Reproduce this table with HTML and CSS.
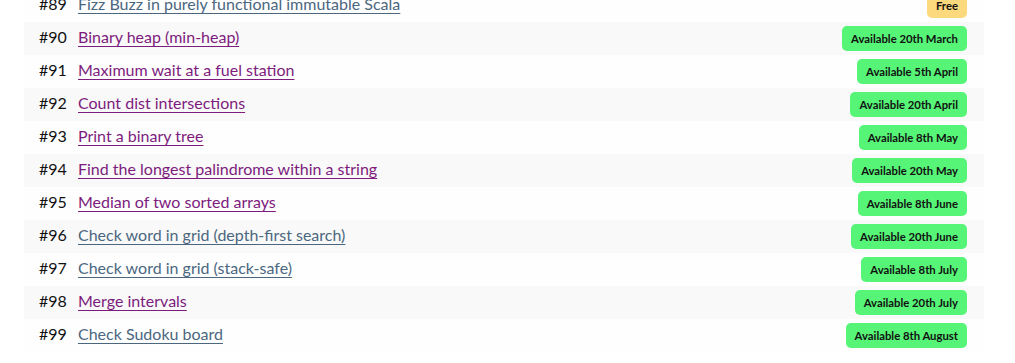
FILE: index.html
```html
<!DOCTYPE html>
<html lang="en">
<head>
<meta charset="utf-8">
<title>Problems</title>
<link rel="stylesheet" href="styles.css">
</head>
<body>
<div class="page">
  <ul class="list">
    <li class="row"><span class="num">#89</span><a class="link fresh" href="#">Fizz Buzz in purely functional immutable Scala</a><span class="badge free">Free</span></li>
    <li class="row"><span class="num">#90</span><a class="link seen" href="#">Binary heap (min-heap)</a><span class="badge avail">Available 20th March</span></li>
    <li class="row"><span class="num">#91</span><a class="link seen" href="#">Maximum wait at a fuel station</a><span class="badge avail">Available 5th April</span></li>
    <li class="row"><span class="num">#92</span><a class="link seen" href="#">Count dist intersections</a><span class="badge avail">Available 20th April</span></li>
    <li class="row"><span class="num">#93</span><a class="link seen" href="#">Print a binary tree</a><span class="badge avail">Available 8th May</span></li>
    <li class="row"><span class="num">#94</span><a class="link seen" href="#">Find the longest palindrome within a string</a><span class="badge avail">Available 20th May</span></li>
    <li class="row"><span class="num">#95</span><a class="link seen" href="#">Median of two sorted arrays</a><span class="badge avail">Available 8th June</span></li>
    <li class="row"><span class="num">#96</span><a class="link fresh" href="#">Check word in grid (depth-first search)</a><span class="badge avail">Available 20th June</span></li>
    <li class="row"><span class="num">#97</span><a class="link fresh" href="#">Check word in grid (stack-safe)</a><span class="badge avail">Available 8th July</span></li>
    <li class="row"><span class="num">#98</span><a class="link seen" href="#">Merge intervals</a><span class="badge avail">Available 20th July</span></li>
    <li class="row"><span class="num">#99</span><a class="link fresh" href="#">Check Sudoku board</a><span class="badge avail">Available 8th August</span></li>
  </ul>
</div>
</body>
</html>
```
FILE: styles.css
```css
html, body {
  margin: 0;
  padding: 0;
  background: #ffffff;
}
body {
  font-family: Lato, "Liberation Sans", sans-serif;
  color: #111111;
  overflow: hidden;
}
.page {
  width: 960px;
  margin: -11px 0 0 24px;
}
.list {
  list-style: none;
  margin: 0;
  padding: 0;
}
.row {
  display: flex;
  align-items: center;
  height: 33px;
  padding: 0 17px 0 15px;
  background: #fefefe;
}
.row:nth-child(even) {
  background: #f9f9f9;
}
.num {
  width: 39px;
  font-size: 16px;
  color: #111111;
  margin-bottom: 4px;
}
.link {
  font-size: 16px;
  margin-bottom: 4px;
  text-decoration: underline;
  text-underline-offset: 3px;
  text-decoration-thickness: 1px;
}
.link.seen { color: #7d1c7d; }
.link.fresh { color: #4b6780; }
.badge {
  margin-left: auto;
  font-size: 11.3px;
  font-weight: 700;
  color: #111111;
  height: 25px;
  line-height: 25px;
  padding: 0 9px;
  border-radius: 5px;
}
.badge.avail { background: #56f577; }
.badge.free { background: #fcd97c; }
```
